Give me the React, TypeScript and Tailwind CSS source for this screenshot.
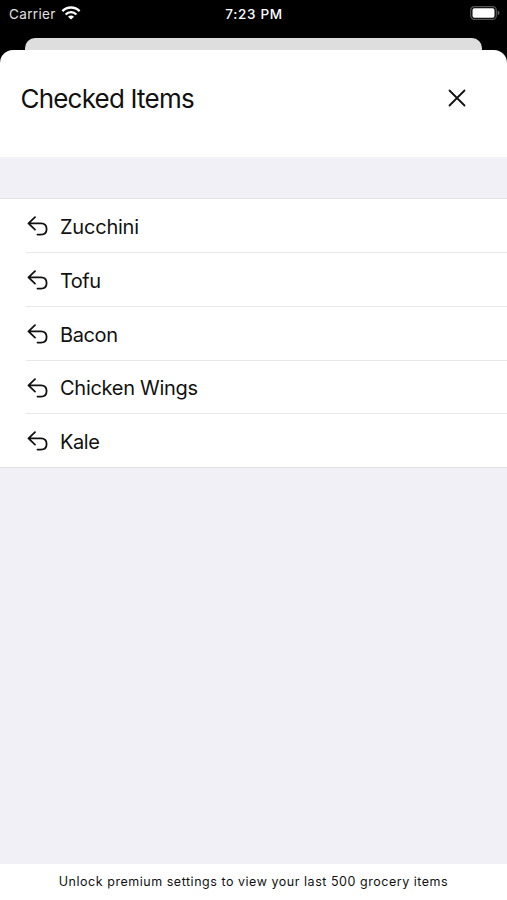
import React from "react";

const items = [
  { id: "zucchini", name: "Zucchini", style: "h-[54px] tracking-[-0.22px]" },
  { id: "tofu", name: "Tofu", style: "h-[54px] tracking-[-0.5px]" },
  { id: "bacon", name: "Bacon", style: "h-[54px] tracking-[-0.4px]" },
  { id: "chicken-wings", name: "Chicken Wings", style: "h-[53px] tracking-[-0.28px]" },
  { id: "kale", name: "Kale", style: "h-[53px] tracking-[-0.4px]" }
];

const WifiIcon = () => (
  <svg width="20" height="14" viewBox="0 0 20 14" fill="none" stroke="white" strokeWidth="2.3">
    <path d="M1.4 5.1C6.2 .3 13.8 .3 18.6 5.1" />
    <path d="M4.6 8.5C7.6 5.4 12.4 5.4 15.4 8.5" />
    <path d="M10 13.6 7 10.8C8.7 9.2 11.3 9.2 13 10.8Z" fill="white" stroke="none" />
  </svg>
);

const BatteryIcon = () => (
  <svg width="30" height="14" viewBox="0 0 30 14" fill="none">
    <rect x=".7" y=".7" width="25.6" height="12.6" rx="3.6" stroke="#555" strokeWidth="1.2" />
    <rect x="2.5" y="2.2" width="22" height="9.6" rx="1.8" fill="white" />
    <path d="M27.7 4.6C30 5.6 30 8.4 27.7 9.4Z" fill="#666" />
  </svg>
);

const UndoIcon = () => (
  <svg width="22" height="20" viewBox="0 0 22 20" fill="none" stroke="#111" strokeWidth="1.8" strokeLinecap="round" strokeLinejoin="round">
    <path d="M8 1.2 1.5 7.4 8 13.6M1.5 7.4H14C17.8 7.4 19.6 9.9 19.6 13C19.6 16.4 17.4 18.6 14 18.6H10.5" />
  </svg>
);

const StatusBar = () => (
  <div className="grid h-[38px] grid-cols-3 pt-[6px] text-[13.5px] leading-4 text-white">
    <div className="flex items-start gap-[5px] pl-[9px]">
      <span className="tracking-[0.35px] text-[#e0e0e0]">Carrier</span>
      <WifiIcon />
    </div>
    <div className="pl-px text-center font-medium tracking-[0.7px]">7:23 PM</div>
    <div className="flex justify-end pr-[7px]">
      <BatteryIcon />
    </div>
  </div>
);

const App = () => {
  return (
    <div className="flex h-[900px] w-[507px] flex-col overflow-hidden bg-black font-['Inter','Liberation_Sans',sans-serif] text-[#111]">
      <StatusBar />
      <div className="mx-[25px] h-3 shrink-0 rounded-t-[10px] bg-[#dedede]"></div>

      <div className="flex flex-1 flex-col overflow-hidden rounded-t-[13px] bg-white">
        <header className="flex h-[107px] shrink-0 items-start justify-between pt-[32px] pr-[41px] pl-[20.5px]">
          <h1 className="text-[26px] leading-[34px] font-normal tracking-[-0.8px]">Checked Items</h1>
          <button aria-label="Close" className="mt-[7px]">
            <svg width="18" height="18" viewBox="0 0 18 18" stroke="#111" strokeWidth="1.8" strokeLinecap="round">
              <path d="M1.5 1.5 16.5 16.5M16.5 1.5 1.5 16.5" />
            </svg>
          </button>
        </header>

        <main className="flex-1 bg-[#f1f0f6] pt-[41px]">
          <ul className="border-y border-[#e2e2e5] bg-white pl-[26px]">
            {items.map((item) => (
              <li
                key={item.id}
                className={`flex items-center gap-[11px] border-b border-[#e8e8e8] pt-px pl-px text-[20px] last:border-b-0 ${item.style}`}
              >
                <UndoIcon />
                <span className="pt-px">{item.name}</span>
              </li>
            ))}
          </ul>
        </main>

        <footer className="h-[36px] shrink-0 pt-[9px] text-center text-[12.5px] leading-[18px] tracking-[0.53px]">
          Unlock premium settings to view your last 500 grocery items
        </footer>
      </div>
    </div>
  );
};

export default App;
